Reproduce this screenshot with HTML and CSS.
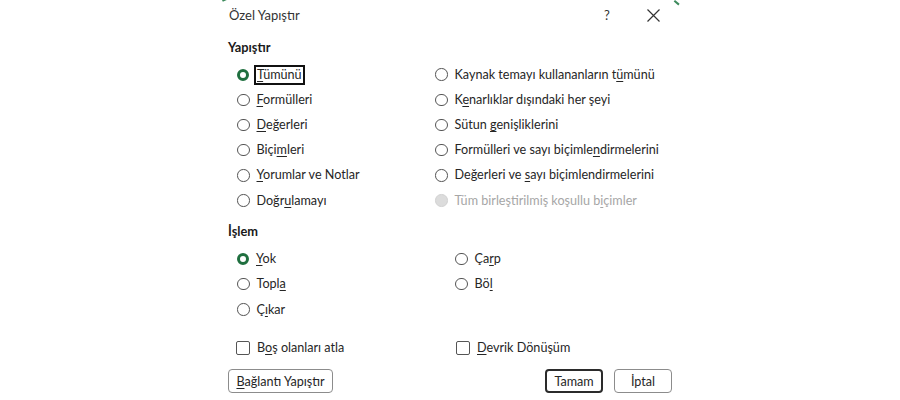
FILE: index.html
```html
<!DOCTYPE html>
<html lang="tr">
<head>
<meta charset="utf-8">
<title>Özel Yapıştır</title>
<link rel="stylesheet" href="styles.css">
</head>
<body>
<div class="dialog">
  <span class="corner tl"></span>
  <span class="corner tr"></span>
  <div class="titlebar">
    <span class="title">Özel Yapıştır</span>
    <span class="help">?</span>
    <span class="close">
      <svg width="13" height="13" viewBox="0 0 13 13"><path d="M0.5 0.5 L12.5 12.5 M12.5 0.5 L0.5 12.5" stroke="#333" stroke-width="1.2" fill="none"/></svg>
    </span>
  </div>

  <div class="heading h-paste">Yapıştır</div>
  <div class="grid paste">
    <div class="opt"><span class="radio on"></span><span class="lbl focus"><u>T</u>ümünü</span></div>
    <div class="opt"><span class="radio"></span><span class="lbl">Kaynak temayı kullananların t<u>ü</u>münü</span></div>
    <div class="opt"><span class="radio"></span><span class="lbl"><u>F</u>ormülleri</span></div>
    <div class="opt"><span class="radio"></span><span class="lbl">K<u>e</u>narlıklar dışındaki her şeyi</span></div>
    <div class="opt"><span class="radio"></span><span class="lbl"><u>D</u>eğerleri</span></div>
    <div class="opt"><span class="radio"></span><span class="lbl">Sütun <u>g</u>enişliklerini</span></div>
    <div class="opt"><span class="radio"></span><span class="lbl">Biçi<u>m</u>leri</span></div>
    <div class="opt"><span class="radio"></span><span class="lbl">Formülleri ve sayı biçimle<u>n</u>dirmelerini</span></div>
    <div class="opt"><span class="radio"></span><span class="lbl"><u>Y</u>orumlar ve Notlar</span></div>
    <div class="opt"><span class="radio"></span><span class="lbl">Değerleri ve <u>s</u>ayı biçimlendirmelerini</span></div>
    <div class="opt"><span class="radio"></span><span class="lbl">Doğr<u>u</u>lamayı</span></div>
    <div class="opt disabled"><span class="radio"></span><span class="lbl">Tüm birleştirilmiş koşullu b<u>i</u>çimler</span></div>
  </div>

  <div class="heading h-op">İşlem</div>
  <div class="grid ops">
    <div class="opt"><span class="radio on"></span><span class="lbl"><u>Y</u>ok</span></div>
    <div class="opt"><span class="radio"></span><span class="lbl">Ça<u>r</u>p</span></div>
    <div class="opt"><span class="radio"></span><span class="lbl">Topl<u>a</u></span></div>
    <div class="opt"><span class="radio"></span><span class="lbl">Bö<u>l</u></span></div>
    <div class="opt"><span class="radio"></span><span class="lbl">Ç<u>ı</u>kar</span></div>
  </div>

  <div class="grid checks">
    <div class="opt"><span class="check"></span><span class="lbl">B<u>o</u>ş olanları atla</span></div>
    <div class="opt"><span class="check"></span><span class="lbl"><u>D</u>evrik Dönüşüm</span></div>
  </div>

  <div class="buttons">
    <button class="btn link"><u>B</u>ağlantı Yapıştır</button>
    <span class="spacer"></span>
    <button class="btn primary">Tamam</button>
    <button class="btn cancel">İptal</button>
  </div>
</div>
</body>
</html>
```

FILE: styles.css
```css
html, body {
  margin: 0;
  padding: 0;
  background: #ffffff;
}
body {
  font-family: "Lato", "Noto Sans", sans-serif;
  font-size: 12.6px;
  color: #262626;
}
.dialog {
  margin-left: 222px;
  width: 456px;
  height: 400px;
  position: relative;
}
.corner {
  position: absolute;
  top: 0;
  width: 6px;
  height: 2px;
  background: #3d8a5c;
}
.corner.tl {
  left: 0;
  transform: rotate(-25deg);
  transform-origin: left top;
}
.corner.tr {
  right: -3px;
  transform: rotate(40deg);
  transform-origin: left top;
}
.titlebar {
  height: 30px;
  display: flex;
  align-items: center;
  padding-left: 7px;
}
.title {
  font-size: 13px;
  color: #333;
  flex: 1;
}
.help {
  font-size: 13px;
  color: #333;
  width: 20px;
  margin-right: 30px;
  text-align: center;
}
.close {
  display: flex;
  width: 13px;
  margin-right: 18px;
}
.heading {
  font-weight: bold;
  font-size: 12.8px;
  color: #1a1a1a;
  padding-left: 6px;
  height: 20px;
  line-height: 20px;
}
.h-paste { margin-top: 7px; }
.h-op { margin-top: 8px; }
.grid {
  display: grid;
  padding-left: 15px;
}
.paste {
  margin-top: 5px;
  grid-template-columns: 198px 1fr;
  grid-auto-rows: 25.2px;
}
.ops {
  margin-top: 5px;
  grid-template-columns: 218px 1fr;
  grid-auto-rows: 25.4px;
}
.checks {
  margin-top: 16px;
  padding-left: 14px;
  grid-template-columns: 220px 1fr;
  grid-auto-rows: 20px;
}
.opt {
  display: flex;
  align-items: center;
  white-space: nowrap;
}
.radio {
  width: 10.5px;
  height: 10.5px;
  border: 1.2px solid #555;
  border-radius: 50%;
  box-sizing: content-box;
  flex: none;
}
.radio.on {
  width: 6px;
  height: 6px;
  border: 3.4px solid #1f6f3f;
}
.opt .lbl {
  margin-left: 7px;
  line-height: 16px;
}
.opt .lbl.focus {
  margin-left: 5px;
  padding: 1px 1px;
  border: 2px solid #111;
  line-height: 14px;
}
.disabled .radio {
  background: #dcdcdc;
  border-color: #d2d2d2;
}
.disabled .lbl {
  color: #a6a6a6;
}
.check {
  width: 12px;
  height: 12px;
  border: 1.2px solid #555;
  border-radius: 2px;
  flex: none;
}
.checks .lbl { margin-left: 7px; }
u {
  text-decoration: underline;
  text-underline-offset: 2px;
  text-decoration-thickness: 1px;
}
.buttons {
  display: flex;
  margin-top: 11px;
  padding-left: 6px;
  padding-right: 6px;
}
.spacer { flex: 1; }
.btn {
  font-family: inherit;
  font-size: 12.6px;
  color: #262626;
  background: #fff;
  border: 1px solid #8c8c8c;
  border-radius: 4px;
  height: 24px;
  padding: 0;
  box-sizing: border-box;
}
.link { width: 105px; }
.primary {
  width: 58px;
  border: 2px solid #2b2b2b;
}
.cancel {
  width: 58px;
  margin-left: 11px;
}
```
